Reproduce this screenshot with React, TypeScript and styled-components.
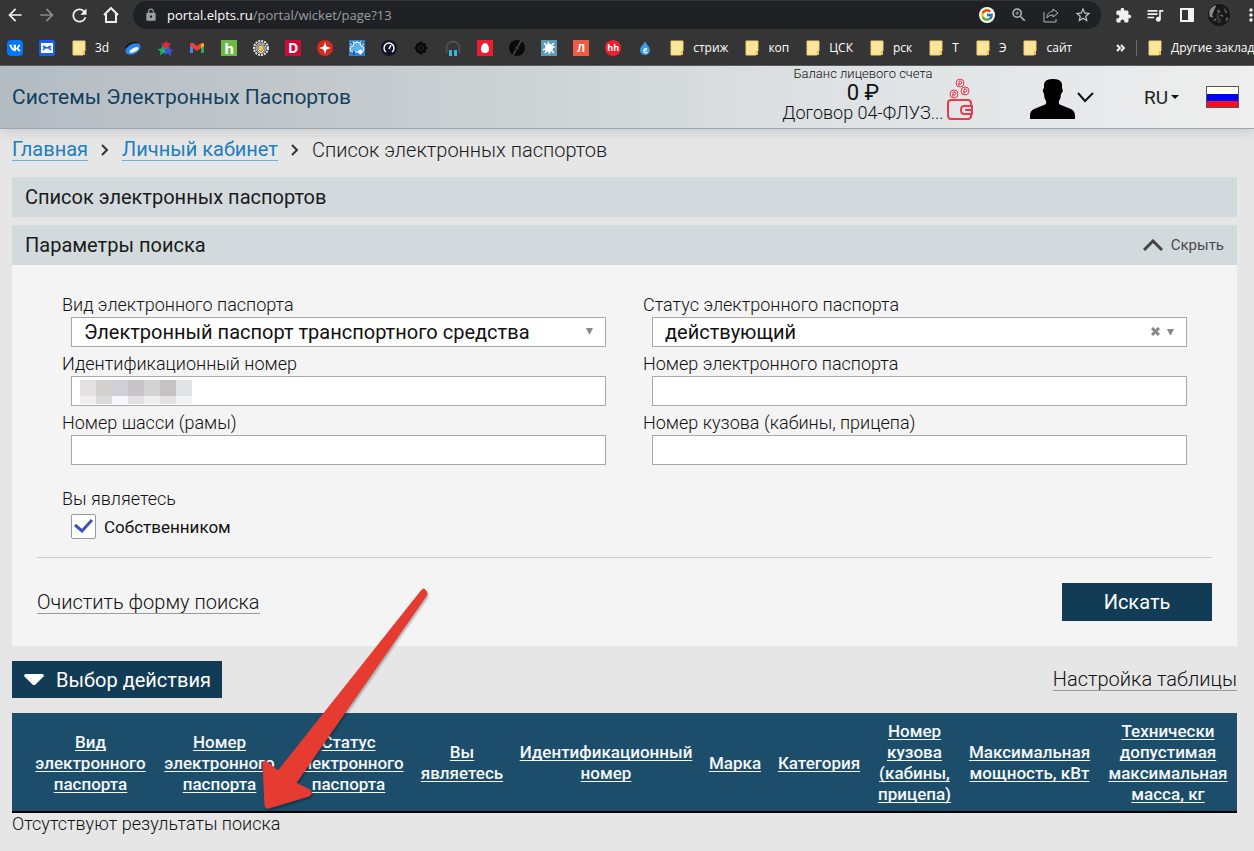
import React from 'react';
import styled, { createGlobalStyle } from 'styled-components';
import {
  MdArrowBack, MdArrowForward, MdRefresh, MdLock, MdZoomIn, MdStarBorder,
  MdExtension, MdQueueMusic, MdMoreVert,
} from 'react-icons/md';
import { FcGoogle } from 'react-icons/fc';
import { FaVk } from 'react-icons/fa';

const GlobalStyle = createGlobalStyle`
  * { box-sizing: border-box; }
  body {
    margin: 0;
    background: #e6e6e6;
    color: #1a1a1a;
    font-family: Roboto, "Liberation Sans", sans-serif;
    font-size: 20px;
    overflow-x: hidden;
  }
  button, input, select { font-family: inherit; color: inherit; }
  button { border: 0; padding: 0; background: none; cursor: pointer; }
`;

/* ---------- browser chrome ---------- */

const Browser = styled.div`
  background: #353535;
  border-bottom: 1px solid #5f5f5f;
  font-family: "Open Sans", "Noto Sans", sans-serif;
  color: #fff;
`;

const Toolbar = styled.div`
  display: flex;
  align-items: center;
  height: 30px;
  padding-left: 7px;
  gap: 14px;
  overflow: hidden;
`;

const IconGroup = styled.div<{ $width?: number }>`
  display: flex;
  flex: none;
  align-items: center;
  gap: 16px;
  overflow: hidden;
  width: ${(p) => (p.$width ? `${p.$width}px` : 'auto')};
`;

const IconButton = styled.button<{ $color?: string }>`
  display: flex;
  flex: none;
  align-items: center;
  justify-content: center;
  width: 16px;
  height: 24px;
  color: ${(p) => p.$color || '#f1f1f1'};
  svg { flex: none; }
`;

const AddressBar = styled.div`
  flex: 1;
  display: flex;
  align-items: center;
  height: 28px;
  padding: 0 10px 0 11px;
  border-radius: 14px;
  background: #202124;
  gap: 9px;
  color: #9aa0a6;
`;

const Url = styled.span`
  flex: 1;
  font-size: 13px;
  white-space: nowrap;
  color: #9b9ea2;
  b { font-weight: 400; color: #fff; }
`;

const Bookmarks = styled.div`
  display: flex;
  align-items: center;
  justify-content: space-between;
  height: 35px;
  padding-left: 7px;
`;

const BookmarkList = styled.div`
  display: flex;
  align-items: center;
  gap: 16px;
  overflow: hidden;
`;

const Bookmark = styled.a`
  display: flex;
  flex: none;
  align-items: center;
  gap: 8px;
  font-size: 12px;
  line-height: 20px;
  color: #fff;
  text-decoration: none;
  white-space: nowrap;
`;

const MoreBookmarks = styled.div`
  display: flex;
  flex: none;
  align-items: center;
  gap: 7px;
  width: 141px;
  overflow: hidden;
`;

const Separator = styled.span`
  flex: none;
  width: 1px;
  height: 16px;
  margin-right: 3px;
  background: #6b6b6b;
`;

const Tile = styled.span<{ $bg: string; $radius?: number; $size?: number }>`
  display: flex;
  align-items: center;
  justify-content: center;
  width: 16px;
  height: 16px;
  border-radius: ${(p) => p.$radius || 0}px;
  background: ${(p) => p.$bg};
  color: #fff;
  font-size: ${(p) => p.$size || 13}px;
  font-weight: 700;
  line-height: 16px;
`;

const Svg = ({ children, size = 16 }: { children: React.ReactNode; size?: number }) => (
  <svg width={size} height={size} viewBox="0 0 16 16" fill="none" aria-hidden="true">{children}</svg>
);

const FolderIcon = () => (
  <Svg>
    <path d="M2 1h12v10l-1 4H2z" fill="#fee498" />
    <path d="M2 1h12v10h-2v4H2z" fill="none" stroke="#f0cf78" strokeWidth="1" />
    <path d="M12 11h2v4h-2z" fill="#e9c35b" />
  </Svg>
);

const star = 'M8 0l2 5h6l-4 4 2 6-6-3-6 3 2-6-4-4h6z';

const favicons: { name: string; icon: React.ReactNode }[] = [
  { name: 'Браузер', icon: (
    <Svg>
      <path d="M0 8Q4 1 13 2L10 7z" fill="#0b0b0b" />
      <ellipse cx="8" cy="9" rx="8" ry="5" transform="rotate(-28 8 9)" fill="#2a86ee" />
      <ellipse cx="9" cy="10" rx="5" ry="2" transform="rotate(-28 9 10)" fill="#e9f6ff" />
    </Svg>) },
  { name: 'Звезды', icon: (
    <Svg>
      <path d={star} transform="translate(4 0) scale(.65)" fill="#e8253b" />
      <path d={star} transform="translate(0 6) rotate(-10) scale(.65)" fill="#23b45b" />
      <path d={star} transform="translate(7 5) rotate(10) scale(.65)" fill="#3654d8" />
    </Svg>) },
  { name: 'Почта Gmail', icon: (
    <Svg>
      <path d="M1 4V13h3V6z" fill="#4285f4" />
      <path d="M12 6v7h3V4z" fill="#34a853" />
      <path d="M1 4q1-2 3-1l4 3 4-3q2-1 3 1v2l-7 5-7-5z" fill="#ea4335" />
      <path d="M12 5v3l3-2V4l-1-1z" fill="#fbbc04" />
    </Svg>) },
  { name: 'Хабр', icon: <Tile $bg="#6dba45" $size={15}>h</Tile> },
  { name: 'Герб', icon: (
    <Svg>
      <circle cx="8" cy="8" r="7" stroke="#e8e8e8" strokeWidth="2" strokeDasharray="2 1" />
      <circle cx="8" cy="8" r="5" fill="#2c2c2c" stroke="#ddd" />
      <path d="M6 6h4v4l-2 2-2-2z" fill="#e9c93d" />
      <path d="M5 5h6M5 6v4l3 3 3-3V6" stroke="#fff" />
    </Svg>) },
  { name: 'D', icon: <Tile $bg="#d1093a" $size={14}>D</Tile> },
  { name: 'Искра', icon: (
    <Svg><circle cx="8" cy="8" r="8" fill="#d42b1e" /><path d="M8 2l1.500 4.500L14 8 9.500 9.500 8 14 6.500 9.500 2 8l4.500-1.500z" fill="#fff" /></Svg>) },
  { name: 'Погода', icon: (
    <Svg>
      <path d="M0 0h16v16H0z" fill="#2e83d9" />
      <path d="M8 1v2M4 1l1 2M12 1l-1 2M1 4l2 1M15 4l-2 1" stroke="#fbe9a0" />
      <path d="M4 12a3 3 0 010-6 4 4 0 018 0 3 3 0 010 6z" fill="#5fb0ef" stroke="#fff" />
      <path d="M5 11v4" stroke="#1f5a9c" strokeWidth="2" />
      <path d="M9 12h5M11.500 9.500v5M10 10l3 4M13 10l-3 4" stroke="#fff" />
    </Svg>) },
  { name: 'Скорость', icon: (
    <Svg>
      <circle cx="8" cy="8" r="8" fill="#14142b" />
      <path d="M5 12a5 5 0 116 0" stroke="#fff" strokeWidth="1.500" />
      <path d="M8 9l2-4" stroke="#fff" strokeWidth="1.500" />
    </Svg>) },
  { name: 'Узор', icon: (
    <Svg>
      <g fill="#0a0a0a">
        <circle cx="8" cy="3.500" r="2" /><circle cx="8" cy="12.500" r="2" />
        <circle cx="3.500" cy="8" r="2" /><circle cx="12.500" cy="8" r="2" />
        <circle cx="5" cy="5" r="2" /><circle cx="11" cy="5" r="2" />
        <circle cx="5" cy="11" r="2" /><circle cx="11" cy="11" r="2" />
        <circle cx="8" cy="8" r="2" />
      </g>
    </Svg>) },
  { name: 'Наушники', icon: (
    <Svg>
      <path d="M1.500 13V8a6.500 6.500 0 0113 0v5" stroke="#505050" strokeWidth="2" />
      <path d="M4 10h3v6H4zM9 10h3v6H9z" fill="#35b8de" />
    </Svg>) },
  { name: 'Яйцо', icon: (
    <Svg><path d="M0 0h16v16H0z" fill="#ee1c2e" /><path d="M8 3c2 0 4 3 4 6a4 4 0 01-8 0c0-3 2-6 4-6z" fill="#fff" /></Svg>) },
  { name: 'Диск', icon: (
    <Svg>
      <circle cx="8" cy="8" r="8" fill="#0a0a0a" />
      <circle cx="8" cy="8" r="2" fill="#353535" />
      <path d="M9 6l3-5M7 10l-3 5" stroke="#4a4a4a" strokeWidth="1.500" />
    </Svg>) },
  { name: 'Клякса', icon: (
    <Svg>
      <path d="M0 0h16v16H0z" fill="#5d9ab8" />
      <path d="M8 5L7 2M8 14l1-3M4 9l-2 1M14 7h-3M3 3l3 3M13 3l-3 3M4 13l2-3M13 13l-3-3" stroke="#fff" strokeWidth="1.500" />
      <circle cx="8" cy="8" r="4" fill="#fff" />
    </Svg>) },
  { name: 'Л', icon: <Tile $bg="#ef5c43" $size={11}>Л</Tile> },
  { name: 'hh', icon: <Tile $bg="#f4202b" $radius={8} $size={9}>hh</Tile> },
  { name: 'Капля', icon: (
    <Svg>
      <path d="M8 1c1 4 5 5 5 9.500A4.800 4.800 0 018 15a4.800 4.800 0 01-5-4.500C3 6 7 5 8 1z" fill="#3a9be8" />
      <path d="M10 9a2 2 0 10.500 3M7 10h3" stroke="#d8f0ff" strokeWidth="1.500" />
    </Svg>) },
];

const folders = ['стриж', 'коп', 'ЦСК', 'рск', 'Т', 'Э', 'сайт'];

const BrowserChrome = () => (
  <Browser>
    <Toolbar>
      <IconGroup>
        <IconButton aria-label="Назад"><MdArrowBack size={20} /></IconButton>
        <IconButton aria-label="Вперед" $color="#8b8b8b"><MdArrowForward size={20} /></IconButton>
        <IconButton aria-label="Обновить"><MdRefresh size={21} /></IconButton>
        <IconButton aria-label="Домой">
          <Svg><path d="M1 8l7-7 7 7M3 7v8h10V7" stroke="#f1f1f1" strokeWidth="2" /></Svg>
        </IconButton>
      </IconGroup>
      <AddressBar>
        <MdLock size={14} />
        <Url><b>portal.elpts.ru</b>/portal/wicket/page?13</Url>
        <IconGroup>
          <IconButton aria-label="Google">
            <Tile $bg="#fff" $radius={8}><FcGoogle size={14} /></Tile>
          </IconButton>
          <IconButton aria-label="Масштаб" $color="#b5b7ba"><MdZoomIn size={18} /></IconButton>
          <IconButton aria-label="Поделиться">
            <Svg>
              <path d="M1 5v10h12v-3" stroke="#b5b7ba" />
              <path d="M10 2l5 4-5 4V8C7 8 5 9 4 11c0-4 2-6 6-7z" stroke="#b5b7ba" strokeLinejoin="round" />
            </Svg>
          </IconButton>
          <IconButton aria-label="В закладки" $color="#c4c6c8"><MdStarBorder size={18} /></IconButton>
        </IconGroup>
      </AddressBar>
      <IconGroup $width={139}>
        <IconButton aria-label="Расширения"><MdExtension size={17} /></IconButton>
        <IconButton aria-label="Музыка"><MdQueueMusic size={20} /></IconButton>
        <IconButton aria-label="Боковая панель">
          <Svg><path d="M2 2h12v12H2z" stroke="#f4f4f4" strokeWidth="2" /><path d="M9 2h5v12H9z" fill="#f4f4f4" /></Svg>
        </IconButton>
        <IconButton aria-label="Профиль">
          <Svg size={22}>
            <circle cx="8" cy="8" r="8" fill="#171717" />
            <path d="M1 5q2-4 5-4L3 8l1 2-3-1z" fill="#8b8b88" />
            <path d="M7 3l2 1-1 4 2 5-3 1-1-5z" fill="#343434" />
            <path d="M11 2l3 4-1 1zM13 10l2 0-2 3z" fill="#676767" />
            <path d="M7 5l2 1M9 8l2 1M4 12l2-1" stroke="#777" />
          </Svg>
        </IconButton>
        <IconButton aria-label="Меню"><MdMoreVert size={20} /></IconButton>
      </IconGroup>
    </Toolbar>
    <Bookmarks>
      <BookmarkList>
        <Bookmark href="#" aria-label="ВКонтакте"><Tile $bg="#0077ff" $radius={4}><FaVk size={12} /></Tile></Bookmark>
        <Bookmark href="#" aria-label="Почта">
          <Tile $bg="#1163ef" $radius={2}>
            <Svg><path d="M2 3h12v10H2z" fill="#fff" /><path d="M4 6l2 2-2 2M12 6l-2 2 2 2M5 6q3 4 6 0" stroke="#1163ef" strokeWidth="1.500" /></Svg>
          </Tile>
        </Bookmark>
        <Bookmark href="#"><FolderIcon />3d</Bookmark>
        {favicons.map((f) => <Bookmark href="#" aria-label={f.name} key={f.name}>{f.icon}</Bookmark>)}
        {folders.map((f) => <Bookmark href="#" key={f}><FolderIcon />{f}</Bookmark>)}
      </BookmarkList>
      <MoreBookmarks>
        <IconButton aria-label="Еще закладки">
          <Svg><path d="M4 5l3 3-3 3M8 5l3 3-3 3" stroke="#f4f4f4" strokeWidth="2" /></Svg>
        </IconButton>
        <Separator />
        <Bookmark href="#"><FolderIcon />Другие закладки</Bookmark>
      </MoreBookmarks>
    </Bookmarks>
  </Browser>
);

/* ---------- portal header ---------- */

const Header = styled.header`
  display: flex;
  align-items: center;
  height: 63px;
  padding: 0 15px 0 12px;
  background: linear-gradient(90deg, #b3bcc3 0%, #c5cbce 30%, #dde1e3 65%, #eeeeee 100%);
  border-bottom: 1px solid #9ba9b4;
  box-shadow: 0 3px 12px rgba(0, 0, 0, 0.12);
`;

const SiteName = styled.a`
  flex: 1;
  color: #123f5c;
  font-size: 21px;
  text-decoration: none;
`;

const Balance = styled.div`
  display: flex;
  flex-direction: column;
  align-items: center;
  align-self: flex-start;
  width: 160px;
  color: #111;
`;

const BalanceLine = styled.span<{ $size: number; $height: number; $light?: boolean }>`
  font-size: ${(p) => p.$size}px;
  line-height: ${(p) => p.$height}px;
  font-weight: ${(p) => (p.$light ? 300 : 400)};
  white-space: nowrap;
`;

const WalletLink = styled.a`
  display: flex;
  padding-top: 3px;
  margin: 0 57px 0 4px;
`;

const AccountButton = styled.button`
  display: flex;
  align-items: center;
  padding-top: 4px;
  margin-right: 50px;
`;

const LanguageButton = styled.button`
  display: flex;
  align-items: center;
  gap: 3px;
  margin-right: 27px;
  font-size: 19px;
  color: #222;
`;

const Flag = styled.span`
  display: block;
  width: 33px;
  height: 22px;
  border: 1px solid #555;
  background: linear-gradient(#fff 0 7px, #0000fa 7px 14px, #fc0d1b 14px);
`;

const PortalHeader = () => (
  <Header>
    <SiteName href="#">Системы Электронных Паспортов</SiteName>
    <Balance>
      <BalanceLine $size={13} $height={16} $light>Баланс лицевого счета</BalanceLine>
      <BalanceLine $size={22} $height={21}>0 ₽</BalanceLine>
      <BalanceLine $size={18} $height={20} $light>Договор 04-ФЛУЗ...</BalanceLine>
    </Balance>
    <WalletLink href="#" aria-label="Кошелек">
      <svg width="26" height="42" viewBox="0 0 26 42" fill="none" stroke="#ea3b4d">
        <circle cx="13" cy="5" r="4" /><circle cx="18" cy="13" r="4" /><circle cx="7" cy="16" r="4" />
        <path d="M12 8V3h2q2 2 0 3h-3M17 16v-5h2q2 2 0 3h-3M6 19v-5h2q2 2 0 3H5" />
        <path d="M24 28v-4l-2-2H4q-3 0-3 3v12q0 4 3 4h18l2-2v-3" strokeWidth="2" />
        <path d="M25 28h-8q-3 0-3 4t3 4h8zM25 32h-7" strokeWidth="2" />
      </svg>
    </WalletLink>
    <AccountButton aria-label="Личный кабинет">
      <svg width="64" height="40" viewBox="0 0 64 40">
        <path d="M0 40v-4q0-4 4-6l10-4q3-1 2-4-2-3-2-7-2-3-1-5l1-1V5q1-5 9-5 8 0 9 5v4q2 3-1 6 0 4-2 7-1 3 2 4l10 4q4 2 4 7v3z" fill="#000" />
        <path d="M48 14l7 8 8-8" fill="none" stroke="#111" strokeWidth="2" />
      </svg>
    </AccountButton>
    <LanguageButton>
      RU
      <svg width="8" height="5" viewBox="0 0 8 5" aria-hidden="true"><path d="M0 0h8L4 4z" fill="#111" /></svg>
    </LanguageButton>
    <Flag role="img" aria-label="Россия" />
  </Header>
);

/* ---------- page ---------- */

const Page = styled.main`
  position: relative;
  padding: 0 17px 14px 12px;
`;

const Breadcrumbs = styled.nav`
  display: flex;
  align-items: center;
  gap: 13px;
  height: 48px;
  padding-bottom: 7px;
  font-size: 20px;
  font-weight: 300;
`;

const TextLink = styled.a<{ $blue?: boolean }>`
  font-size: 20px;
  font-weight: ${(p) => (p.$blue ? 400 : 300)};
  line-height: 22px;
  color: ${(p) => (p.$blue ? '#1b7fc0' : '#111')};
  border-bottom: 1px solid ${(p) => (p.$blue ? '#72b1dc' : '#999')};
  text-decoration: none;
`;

const Crumb = () => (
  <svg width="8" height="12" viewBox="0 0 8 12" aria-hidden="true">
    <path d="M1 1l5 5-5 5" fill="none" stroke="#333" strokeWidth="2" />
  </svg>
);

const Bar = styled.div`
  display: flex;
  align-items: center;
  justify-content: space-between;
  height: 40px;
  padding: 0 13px;
  background: #d3dadd;
`;

const BarTitle = styled.h2`
  margin: 0;
  font-size: 20px;
  font-weight: 400;
`;

const Stack = styled.div`
  display: grid;
  gap: 8px;
`;

const CollapseButton = styled.button`
  display: flex;
  align-items: center;
  gap: 8px;
  font-size: 15px;
  color: #4a4a4a;
`;

const Panel = styled.form`
  padding: 27px 25px 25px;
  background: #f4f4f4;
`;

const Fields = styled.div`
  display: grid;
  grid-template-columns: 1fr 1fr;
  column-gap: 37px;
  padding: 0 25px;
`;

const Field = styled.div`
  display: flex;
  flex-direction: column;
`;

const Label = styled.label`
  font-size: 18px;
  font-weight: 300;
  line-height: 25px;
  color: #111;
`;

const Control = styled.div`
  position: relative;
  display: flex;
  margin: 0 0 4px 9px;
`;

const controlBox = `
  width: 100%;
  height: 30px;
  border: 1px solid #a9a9a9;
  border-radius: 0;
  background: #fff;
  font-size: 20px;
  color: #111;
`;

const TextInput = styled.input`
  ${controlBox}
  padding: 0 8px;
`;

const Select = styled.select`
  ${controlBox}
  padding: 0 40px 0 12px;
  appearance: none;
`;

const SelectMarks = styled.span`
  position: absolute;
  right: 12px;
  top: 10px;
  display: flex;
  align-items: center;
  gap: 6px;
  color: #888;
  pointer-events: none;
`;

const Mosaic = styled.svg`
  position: absolute;
  left: 9px;
  top: 4px;
`;

const Triangle = () => (
  <svg width="9" height="8" viewBox="0 0 9 8" aria-hidden="true"><path d="M1 1h7L5 7H4z" fill="#888" /></svg>
);

const mosaicTop = ['#e3e1e2', '#d4d0cd', '#cdd1d7', '#c8c5c8', '#d3d3d3', '#c4c3c1', '#e2e3e5'];
const mosaicBottom = ['#efefef', '#dcdcdc', '#f6f7fa', '#e3e0e2', '#efeff1', '#e2e2e2', '#f3f3f5'];

const RoleGroup = styled.div`
  padding: 15px 25px 18px;
  border-bottom: 1px solid #ccc;
`;

const GroupTitle = styled.div`
  font-size: 18px;
  font-weight: 300;
  line-height: 29px;
  color: #111;
`;

const CheckLabel = styled.label`
  position: relative;
  display: flex;
  align-items: center;
  gap: 8px;
  margin: 1px 0 0 9px;
  height: 25px;
  font-size: 17px;
  color: #111;
`;

const Checkbox = styled.input`
  appearance: none;
  width: 25px;
  height: 25px;
  margin: 0;
  border: 1px solid #999;
  border-radius: 2px;
  background: #fff;
`;

const CheckMark = styled.svg`
  position: absolute;
  left: 3px;
  top: 4px;
  pointer-events: none;
`;

const Actions = styled.div`
  display: flex;
  justify-content: space-between;
  align-items: center;
  padding-top: 25px;
`;

const SearchButton = styled.button`
  width: 150px;
  height: 38px;
  background: #123b55;
  color: #fff;
  font-size: 20px;
`;

const TableTools = styled.div`
  display: flex;
  align-items: center;
  justify-content: space-between;
  padding: 15px 0;
`;

const ActionButton = styled.button`
  display: flex;
  align-items: center;
  gap: 11px;
  height: 37px;
  padding: 0 11px;
  background: #123b55;
  color: #fff;
  font-size: 20px;
  white-space: nowrap;
`;

const Results = styled.table`
  width: 100%;
  table-layout: fixed;
  border-collapse: collapse;
`;

const HeadCell = styled.th`
  height: 99px;
  padding: 2px 4px 0;
  background: #1c4e6b;
  border-bottom: 2px solid #000;
  color: #f5f7f8;
  font-size: 17px;
  font-weight: 500;
  line-height: 21px;
  &:first-child { padding-left: 18px; }
  a { color: inherit; text-underline-offset: 2px; text-decoration-skip-ink: none; }
`;

const EmptyCell = styled.td`
  padding: 0;
  font-size: 18px;
  font-weight: 300;
  line-height: 22px;
  color: #111;
`;

const Arrow = styled.svg`
  position: absolute;
  left: 255px;
  top: 453px;
  pointer-events: none;
  filter: drop-shadow(1px 2px 1px rgba(0, 0, 0, 0.3));
`;

const columns: [string, number][] = [
  ['Вид электронного паспорта', 143],
  ['Номер электронного паспорта', 129],
  ['Статус электронного паспорта', 129],
  ['Вы являетесь', 98],
  ['Идентификационный номер', 190],
  ['Марка', 68],
  ['Категория', 100],
  ['Номер кузова (кабины, прицепа)', 91],
  ['Максимальная мощность, кВт', 139],
  ['Технически допустимая максимальная масса, кг', 138],
];

export default function App() {
  return (
    <>
      <GlobalStyle />
      <BrowserChrome />
      <PortalHeader />
      <Page>
        <Breadcrumbs>
          <TextLink href="#" $blue>Главная</TextLink>
          <Crumb />
          <TextLink href="#" $blue>Личный кабинет</TextLink>
          <Crumb />
          <span>Список электронных паспортов</span>
        </Breadcrumbs>
        <Stack>
          <Bar><BarTitle>Список электронных паспортов</BarTitle></Bar>
          <Bar>
            <BarTitle>Параметры поиска</BarTitle>
            <CollapseButton>
              <svg width="20" height="12" viewBox="0 0 20 12" aria-hidden="true">
                <path d="M1 11l9-9 9 9" fill="none" stroke="#444" strokeWidth="3" />
              </svg>
              Скрыть
            </CollapseButton>
          </Bar>
        </Stack>
        <Panel onSubmit={(e) => e.preventDefault()}>
          <Fields>
            <Field>
              <Label htmlFor="kind">Вид электронного паспорта</Label>
              <Control>
                <Select id="kind"><option>Электронный паспорт транспортного средства</option></Select>
                <SelectMarks><Triangle /></SelectMarks>
              </Control>
            </Field>
            <Field>
              <Label htmlFor="status">Статус электронного паспорта</Label>
              <Control>
                <Select id="status"><option>действующий</option></Select>
                <SelectMarks>
                  <svg width="9" height="9" viewBox="0 0 9 9"><path d="M1 1l7 7M8 1L1 8" stroke="#888" strokeWidth="3" /></svg>
                  <Triangle />
                </SelectMarks>
              </Control>
            </Field>
            <Field>
              <Label htmlFor="vin">Идентификационный номер</Label>
              <Control>
                <TextInput id="vin" />
                <Mosaic width="112" height="24" aria-hidden="true">
                  {mosaicTop.map((c, i) => <rect key={i} x={i * 16} y="0" width="16" height="16" fill={c} />)}
                  {mosaicBottom.map((c, i) => <rect key={i} x={i * 16} y="16" width="16" height="8" fill={c} />)}
                </Mosaic>
              </Control>
            </Field>
            <Field>
              <Label htmlFor="number">Номер электронного паспорта</Label>
              <Control><TextInput id="number" /></Control>
            </Field>
            <Field>
              <Label htmlFor="chassis">Номер шасси (рамы)</Label>
              <Control><TextInput id="chassis" /></Control>
            </Field>
            <Field>
              <Label htmlFor="body">Номер кузова (кабины, прицепа)</Label>
              <Control><TextInput id="body" /></Control>
            </Field>
          </Fields>
          <RoleGroup>
            <GroupTitle>Вы являетесь</GroupTitle>
            <CheckLabel>
              <Checkbox type="checkbox" defaultChecked />
              <CheckMark width="20" height="16" viewBox="0 0 20 16"><path d="M1 7l7 6L18 2" fill="none" stroke="#3f51b5" strokeWidth="3" /></CheckMark>
              Собственником
            </CheckLabel>
          </RoleGroup>
          <Actions>
            <TextLink href="#">Очистить форму поиска</TextLink>
            <SearchButton type="submit">Искать</SearchButton>
          </Actions>
        </Panel>
        <TableTools>
          <ActionButton>
            <svg width="22" height="12" viewBox="0 0 22 12" aria-hidden="true"><path d="M2 0h18l1 2-9 9h-2L1 2z" fill="#fff" /></svg>
            Выбор действия
          </ActionButton>
          <TextLink href="#">Настройка таблицы</TextLink>
        </TableTools>
        <Results>
          <colgroup>{columns.map(([name, width]) => <col key={name} width={width} />)}</colgroup>
          <thead>
            <tr>{columns.map(([name]) => <HeadCell key={name}><a href="#">{name}</a></HeadCell>)}</tr>
          </thead>
          <tbody>
            <tr><EmptyCell colSpan={10}>Отсутствуют результаты поиска</EmptyCell></tr>
          </tbody>
        </Results>
        <Arrow width="180" height="234" viewBox="0 0 180 234" aria-hidden="true">
          <path d="M166 9q3-4 5 0 2 2 0 5L41 201l14 7q3 4-1 6l-40 12q-4 1-4-3L8 182q0-5 4-2l11 9z" fill="#e53b30" stroke="#e53b30" strokeWidth="1" strokeLinejoin="round" />
        </Arrow>
      </Page>
    </>
  );
}
